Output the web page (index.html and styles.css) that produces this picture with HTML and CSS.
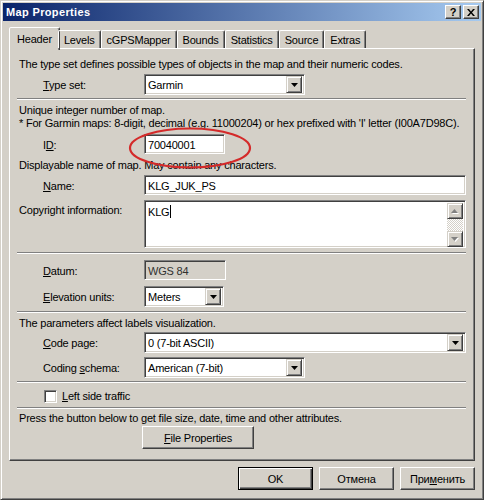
FILE: index.html
```html
<!DOCTYPE html>
<html lang="en">
  <head>
    <meta charset="UTF-8" />
    <title>Map Properties</title>
    <link rel="stylesheet" href="styles.css">
  </head>
  <body>
    <div class="window">
      <div class="titlebar">
        <span class="title">Map Properties</span>
        <div class="caption-btns">
          <div class="cap-btn help">?</div>
          <div class="cap-btn">
            <svg width="8" height="7" viewBox="0 0 8 7"><path d="M0 0h2l2 2.5L6 0h2L5 3.5 8 7H6L4 4.5 2 7H0l3-3.5z" /></svg>
          </div>
        </div>
      </div>

      <div class="tabs">
        <div class="tab active">Header</div>
        <div class="tab">Levels</div>
        <div class="tab">cGPSMapper</div>
        <div class="tab">Bounds</div>
        <div class="tab">Statistics</div>
        <div class="tab">Source</div>
        <div class="tab">Extras</div>
      </div>

      <div class="panel">
        <p class="note first">The type set defines possible types of objects in the map and their numeric codes.</p>
        <div class="row combo-row">
          <label class="lbl"><u>T</u>ype set:</label>
          <div class="field combo w161">
            <span class="value">Garmin</span>
            <span class="drop"><svg width="7" height="4"><polygon points="0,0 7,0 3.5,4" /></svg></span>
          </div>
        </div>

        <div class="sep s3"></div>
        <p class="note m3">Unique integer number of map.</p>
        <p class="note">* For Garmin maps: 8-digit, decimal (e.g. 11000204) or hex prefixed with 'I' letter (I00A7D98C).</p>
        <div class="row edit-row m5">
          <label class="lbl">I<u>D</u>:</label>
          <div class="field w81"><span class="value">70040001</span></div>
        </div>

        <p class="note m4">Displayable name of map. May contain any characters.</p>
        <div class="row edit-row m4">
          <label class="lbl"><u>N</u>ame:</label>
          <div class="field grow"><span class="value">KLG_JUK_PS</span></div>
        </div>
        <div class="row memo-row m5">
          <label class="lbl flush">Copyright information:</label>
          <div class="field memo grow">
            <span class="value">KLG<span class="caret"></span></span>
            <div class="scrollbar">
              <span class="sb-btn"><svg width="8" height="5"><polygon points="0,4 7,4 3.5,0" fill="#fff" transform="translate(1,1)" /><polygon points="0,4 7,4 3.5,0" fill="#808080" /></svg></span>
              <span class="sb-track"></span>
              <span class="sb-btn"><svg width="8" height="5"><polygon points="0,0 7,0 3.5,4" fill="#fff" transform="translate(1,1)" /><polygon points="0,0 7,0 3.5,4" fill="#808080" /></svg></span>
            </div>
          </div>
        </div>

        <div class="sep s4"></div>
        <div class="row edit-row m6">
          <label class="lbl"><u>D</u>atum:</label>
          <div class="field readonly w82"><span class="value">WGS 84</span></div>
        </div>
        <div class="row combo-row m6">
          <label class="lbl"><u>E</u>levation units:</label>
          <div class="field combo w80">
            <span class="value">Meters</span>
            <span class="drop"><svg width="7" height="4"><polygon points="0,0 7,0 3.5,4" /></svg></span>
          </div>
        </div>

        <div class="sep s4"></div>
        <p class="note m3">The parameters affect labels visualization.</p>
        <div class="row combo-row m3">
          <label class="lbl"><u>C</u>ode page:</label>
          <div class="field combo grow">
            <span class="value">0 (7-bit ASCII)</span>
            <span class="drop"><svg width="7" height="4"><polygon points="0,0 7,0 3.5,4" /></svg></span>
          </div>
        </div>
        <div class="row combo-row m4">
          <label class="lbl">Coding <u>s</u>chema:</label>
          <div class="field combo w161">
            <span class="value">American (7-bit)</span>
            <span class="drop"><svg width="7" height="4"><polygon points="0,0 7,0 3.5,4" /></svg></span>
          </div>
        </div>

        <div class="sep s3"></div>
        <div class="check-row">
          <span class="checkbox"></span>
          <span><u>L</u>eft side traffic</span>
        </div>

        <div class="sep s3"></div>
        <p class="note m2">Press the button below to get file size, date, time and other attributes.</p>
        <div class="btn file-btn"><u>F</u>ile Properties</div>
      </div>

      <div class="footer">
        <div class="btn dlg default">OK</div>
        <div class="btn dlg">Отмена</div>
        <div class="btn dlg">При<u>м</u>енить</div>
      </div>

      <svg class="mark" width="126" height="44" viewBox="0 0 126 44">
        <ellipse cx="62" cy="22" rx="60" ry="19.5" />
      </svg>
    </div>
  </body>
</html>
```

FILE: styles.css
```css
* {
  box-sizing: border-box;
}
body {
  margin: 0;
  background: #d4d0c8;
  font-family: "Liberation Sans", Arial, sans-serif;
  font-size: 11px;
  letter-spacing: -0.2px;
  color: #000;
}
p {
  margin: 0;
}
u {
  text-decoration: underline;
  text-underline-offset: 1px;
}

.window {
  position: relative;
  width: 484px;
  height: 500px;
  padding: 2px;
  background: #d4d0c8;
  border: 1px solid;
  border-color: #d4d0c8 #404040 #404040 #d4d0c8;
  box-shadow: inset 1px 1px #fff, inset -1px -1px #808080;
}

/* title bar */
.titlebar {
  display: flex;
  align-items: center;
  justify-content: space-between;
  height: 18px;
  padding: 0 2px 0 3px;
  background: linear-gradient(to right, #0a246a, #a6caf0);
}
.title {
  color: #fff;
  font-weight: bold;
  letter-spacing: 0.35px;
}
.caption-btns {
  display: flex;
  gap: 2px;
}
.cap-btn {
  display: flex;
  align-items: center;
  justify-content: center;
  width: 16px;
  height: 14px;
  background: #d4d0c8;
  border: 1px solid;
  border-color: #fff #404040 #404040 #fff;
  box-shadow: inset -1px -1px #808080;
  font-weight: bold;
  font-size: 11px;
  line-height: 12px;
}

/* tabs */
.tabs {
  position: relative;
  z-index: 1;
  display: flex;
  align-items: flex-end;
  height: 21px;
  margin: 6px 6px 0;
  padding-left: 2px;
}
.tab {
  height: 18px;
  padding: 0 5px;
  line-height: 18px;
  border: 1px solid;
  border-bottom: none;
  border-color: #fff #404040 transparent #fff;
  border-radius: 2px 2px 0 0;
  box-shadow: inset -1px 0 #808080;
}
.tab.active {
  height: 23px;
  margin: 0 -2px -2px;
  padding: 0 7px 3px;
  line-height: 22px;
  background: #d4d0c8;
}

/* tab page */
.panel {
  display: flex;
  flex-direction: column;
  height: 413px;
  margin: 0 6px;
  padding: 8px 8px 8px 9px;
  border: 1px solid;
  border-color: #fff #404040 #404040 #fff;
  box-shadow: inset -1px -1px #808080;
}
.note {
  height: 13px;
  line-height: 14px;
  white-space: nowrap;
}
.note.first {
  height: 14px;
  line-height: 15px;
}
.m2 { margin-top: 2px; }
.m3 { margin-top: 3px; }
.m4 { margin-top: 4px; }
.m5 { margin-top: 5px; }
.m6 { margin-top: 6px; }

.row {
  display: flex;
  align-items: center;
}
.combo-row {
  height: 21px;
  margin-top: 3px;
}
.combo-row.m3 { margin-top: 3px; }
.combo-row.m4 { margin-top: 4px; }
.combo-row.m6 { margin-top: 6px; }
.edit-row {
  height: 20px;
}
.memo-row {
  height: 48px;
  align-items: flex-start;
}
.lbl {
  flex: none;
  width: 125px;
  padding-left: 24px;
  padding-top: 1px;
}
.lbl.flush {
  padding-left: 0;
  padding-top: 4px;
}

/* sunken fields */
.field {
  position: relative;
  display: flex;
  align-items: center;
  height: 100%;
  background: #fff;
  border: 1px solid;
  border-color: #808080 #fff #fff #808080;
  box-shadow: inset 1px 1px #404040, inset -1px -1px #d4d0c8;
  padding-left: 3px;
}
.field .value {
  flex: 1;
  padding-top: 1px;
  white-space: nowrap;
}
.field.readonly {
  background: #d4d0c8;
  color: #303030;
}
.w80 { width: 80px; }
.w81 { width: 81px; }
.w82 { width: 82px; }
.w161 { width: 161px; }
.grow { flex: 1; }

.combo {
  padding-right: 2px;
}
.drop {
  display: flex;
  align-items: center;
  justify-content: center;
  width: 16px;
  height: 17px;
  background: #d4d0c8;
  border: 1px solid;
  border-color: #d4d0c8 #404040 #404040 #d4d0c8;
  box-shadow: inset 1px 1px #fff, inset -1px -1px #808080;
}

.memo {
  align-items: flex-start;
  padding: 3px 2px 2px 3px;
}
.caret {
  display: inline-block;
  width: 1px;
  height: 13px;
  margin-left: 1px;
  vertical-align: -2px;
  background: #000;
}
.scrollbar {
  display: flex;
  flex-direction: column;
  width: 16px;
  height: 44px;
  margin-top: -1px;
}
.sb-btn {
  display: flex;
  align-items: center;
  justify-content: center;
  height: 16px;
  background: #d4d0c8;
  border: 1px solid;
  border-color: #d4d0c8 #404040 #404040 #d4d0c8;
  box-shadow: inset 1px 1px #fff, inset -1px -1px #808080;
}
.sb-track {
  flex: 1;
  background: repeating-conic-gradient(#fff 0 25%, #d4d0c8 0 50%) 0 0 / 2px 2px;
}

/* etched separators */
.sep {
  height: 2px;
  margin-left: -2px;
  border-top: 1px solid #808080;
  border-bottom: 1px solid #fff;
}
.s3 { margin-top: 3px; }
.s4 { margin-top: 4px; }

.check-row {
  display: flex;
  align-items: center;
  gap: 5px;
  height: 16px;
  margin-top: 5px;
  padding-left: 25px;
}
.checkbox {
  width: 13px;
  height: 13px;
  background: #fff;
  border: 1px solid;
  border-color: #808080 #fff #fff #808080;
  box-shadow: inset 1px 1px #404040, inset -1px -1px #d4d0c8;
}

/* push buttons */
.btn {
  display: flex;
  align-items: center;
  justify-content: center;
  height: 23px;
  padding-top: 1px;
  background: #d4d0c8;
  border: 1px solid;
  border-color: #fff #404040 #404040 #fff;
  box-shadow: inset -1px -1px #808080;
}
.file-btn {
  width: 112px;
  margin: 2px 0 0 123px;
}
.footer {
  display: flex;
  justify-content: flex-end;
  gap: 6px;
  margin: 6px 6px 0;
}
.dlg {
  width: 75px;
}
.dlg.default {
  border-color: #000;
  box-shadow: inset 1px 1px #fff, inset -1px -1px #404040, inset -2px -2px #808080;
}

/* red hand-drawn mark over the ID field */
.mark {
  position: absolute;
  left: 127px;
  top: 125px;
  fill: none;
  stroke: #d42a2a;
  stroke-width: 2.2;
}
```
